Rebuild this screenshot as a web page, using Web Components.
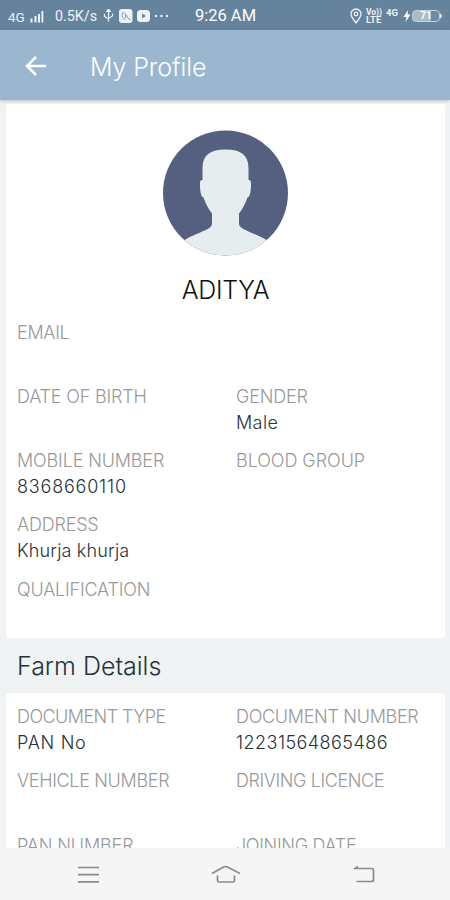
<!DOCTYPE html>
<html lang="en">
<head>
<meta charset="utf-8">
<title>My Profile</title>
<style>
	html,
	body {
		height: 100%;
	}
	body {
		margin: 0;
		overflow: hidden;
		font-family: Inter, Roboto, sans-serif;
		font-weight: 300;
	}
</style>
</head>
<body>
<profile-screen></profile-screen>

<script>
class StatusBar extends HTMLElement {
	constructor() {
		super();
		this.attachShadow({ mode: 'open' });
	}

	connectedCallback() {
		this.shadowRoot.innerHTML = `
		<style>
			:host {
				display: grid;
				grid-template-columns: 1fr auto 1fr;
				align-items: center;
				height: 30px;
				padding: 2px 7px 0 8px;
				box-sizing: border-box;
				background: #66839d;
				color: #eef3f7;
				font: 400 13.5px/16px Roboto, sans-serif;
			}
			.side {
				display: flex;
				align-items: center;
			}
			.right {
				justify-content: flex-end;
			}
			svg {
				display: block;
				flex: none;
			}
			.time {
				font-size: 16.5px;
				color: #fff;
			}
			.carrier {
				width: 18px;
				margin-top: 1px;
			}
			.speed {
				width: 43px;
				margin: 0 5px 0 11px;
				font-size: 14.3px;
			}
			.volte {
				display: grid;
				margin-left: 4px;
				font: 700 8.5px/8px Roboto, sans-serif;
			}
			.volte span:last-child {
				font-size: 9.5px;
			}
			.net {
				margin: -7px 5px 0 4px;
				font: 700 9.5px/9px Roboto, sans-serif;
			}
			.battery {
				width: 26px;
				height: 10px;
				margin-left: 1px;
				border: 1px solid #c4d0da;
				border-radius: 4px;
				background: linear-gradient(90deg, #a9bac8 71%, #7089a0 71%);
				font: 700 10px/10px Roboto, sans-serif;
				text-align: center;
				color: #fff;
			}
		</style>
		<div class="side">
			<span class="carrier">4G</span>
			<svg width="15" height="13" viewBox="0 0 15 13" fill="#eef3f7" style="margin-left:3px">
				<path d="M1.500 8.500h2v4h-2zM5.500 6h2v6.500h-2zM9 4h2v8.500H9zM12.500 1h1.800v11.500h-1.800z"/>
			</svg>
			<span class="speed">0.5K/s</span>
			<svg width="11" height="14" viewBox="0 0 11 14" fill="none" stroke="#eef3f7" stroke-width="1.200">
				<path d="M5.500 2v10M1.500 5v2.500l4 2.500M9.500 4.500V7l-4 2.500"/>
				<path d="M5.500 0l1.700 2.500H3.800zM5.500 11.500v1" fill="#eef3f7"/>
			</svg>
			<svg width="32" height="14" viewBox="0 0 32 14" fill="#eef3f7" style="margin-left:5px">
				<rect y="0" width="13.500" height="14" rx="3"/>
				<path d="M4 8.500C2.500 6 3 3.500 4.500 3.500S7 6 6.500 9M7.500 6c1 3 2 4.500 4 4.500M4 9.500l2.500 1" fill="none" stroke="#66839d" stroke-width=".8"/>
				<rect x="18" y="1" width="13" height="12" rx="3.500"/>
				<path d="M23 4.500v5l4-2.500z" fill="#66839d"/>
			</svg>
			<svg width="16" height="4" viewBox="0 0 16 4" fill="#eef3f7" style="margin-left:3px">
				<circle cx="2" cy="2" r="1.200"/><circle cx="7.500" cy="2" r="1.200"/><circle cx="13" cy="2" r="1.200"/>
			</svg>
		</div>
		<span class="time">9:26 AM</span>
		<div class="side right">
			<svg width="12" height="16" viewBox="0 0 12 16" fill="none" stroke="#eef3f7" stroke-width="1.300">
				<path d="M6 15C4 12 1 9 1 6a5 5 0 0 1 10 0c0 3-3 6-5 9z"/>
				<circle cx="6" cy="6" r="1.800"/>
			</svg>
			<div class="volte"><span>Vo))</span><span>LTE</span></div>
			<span class="net">4G</span>
			<svg width="8" height="12" viewBox="0 0 8 12" fill="#fff"><path d="M5 0L0.500 7H3.500L2.500 12 7.500 4.500H4.500z"/></svg>
			<div class="battery">71</div>
			<svg width="3" height="6" viewBox="0 0 3 6" fill="#dbe4eb"><path d="M0 0l2.500 3L0 6z"/></svg>
		</div>
		`;
	}
}

customElements.define('status-bar', StatusBar);

class AppBar extends HTMLElement {
	constructor() {
		super();
		this.attachShadow({ mode: 'open' });
	}

	connectedCallback() {
		this.shadowRoot.innerHTML = `
		<style>
			:host {
				display: flex;
				align-items: center;
				height: 70px;
				padding: 0 25px;
				background: #9bb6cf;
				color: #fff;
				box-shadow: 0 1px 3px rgba(0, 0, 0, 0.22);
				z-index: 1;
				font-size: 25px;
				line-height: 32px;
				letter-spacing: -0.1px;
			}
			svg {
				margin-top: 1px;
			}
			.title {
				margin: 3px 0 0 43px;
			}
		</style>
		<svg width="22" height="22" viewBox="0 0 22 22" fill="none" stroke="#fff" stroke-width="2.500">
			<path d="M21 11H3M11 2L2 11l9 9"/>
		</svg>
		<span class="title"><slot></slot></span>
		`;
	}
}

customElements.define('app-bar', AppBar);

class ProfileAvatar extends HTMLElement {
	constructor() {
		super();
		this.attachShadow({ mode: 'open' });
	}

	connectedCallback() {
		this.shadowRoot.innerHTML = `
		<style>
			:host {
				display: flex;
				flex-direction: column;
				align-items: center;
				color: #111;
				font-size: 25px;
				line-height: 32px;
				letter-spacing: -0.3px;
			}
			svg {
				display: block;
				margin-bottom: 18px;
			}
		</style>
		<svg width="126" height="126" viewBox="0 0 126 126">
			<defs><clipPath id="disc"><circle cx="62.500" cy="63" r="62.500"/></clipPath></defs>
			<g clip-path="url(#disc)">
				<rect width="126" height="126" fill="#555f80"/>
				<path fill="#e6edee" d="M39.500 50V38C39.500 25 47 19.500 62.500 19.500S85.500 25 85.500 38v12c2.500 0 2.500 1.500 2.500 5 0 6-1 12-3.500 12.500-2 6-5 11.500-8.500 16v9.500c0 2.500 1 4 3.500 5.500 7 4 17 7 24 11.500V127H21.500v-17c7-4.500 17-7.500 24-11.500 2.500-1.500 3.500-3 3.500-5.500v-9.500c-3.500-4.500-6.500-10-8.500-16C38 67 37 61 37 55c0-3.500 0-5 2.500-5z"/>
			</g>
		</svg>
		<slot></slot>
		`;
	}
}

customElements.define('profile-avatar', ProfileAvatar);

class ProfileField extends HTMLElement {
	constructor() {
		super();
		this.attachShadow({ mode: 'open' });
	}

	connectedCallback() {
		const labelTracking = this.getAttribute('label-tracking') || -0.2;
		const valueTracking = this.getAttribute('value-tracking') || 0.4;
		this.shadowRoot.innerHTML = `
		<style>
			:host {
				display: block;
				height: 64.3px;
				font-size: 18px;
				line-height: 26px;
				white-space: nowrap;
			}
			:host([wide]) {
				grid-column: 1 / -1;
			}
			.label {
				color: #999;
				letter-spacing: ${labelTracking}px;
			}
			.value {
				color: #263238;
				letter-spacing: ${valueTracking}px;
			}
		</style>
		<div class="label">${this.getAttribute('label')}</div>
		<div class="value"><slot></slot></div>
		`;
	}
}

customElements.define('profile-field', ProfileField);

class DetailCard extends HTMLElement {
	constructor() {
		super();
		this.attachShadow({ mode: 'open' });
	}

	connectedCallback() {
		this.shadowRoot.innerHTML = `
		<style>
			:host {
				display: block;
				margin: 0 5px 0 6px;
				box-sizing: border-box;
				background: #fff;
				border-radius: 3px;
			}
			.fields {
				display: grid;
				grid-template-columns: 219px 1fr;
				padding: 0 11px;
			}
		</style>
		<slot name="head"></slot>
		<div class="fields"><slot></slot></div>
		`;
	}
}

customElements.define('detail-card', DetailCard);

class NavBar extends HTMLElement {
	constructor() {
		super();
		this.attachShadow({ mode: 'open' });
	}

	connectedCallback() {
		this.shadowRoot.innerHTML = `
		<style>
			:host {
				display: flex;
				justify-content: space-between;
				align-items: center;
				height: 52px;
				padding: 2px 75px 0 77px;
				box-sizing: border-box;
				background: #f5f5f5;
			}
			svg {
				display: block;
				fill: none;
				stroke: #8a8a8a;
				stroke-width: 1.700;
			}
		</style>
		<svg width="22" height="20" viewBox="0 0 22 20"><path d="M1 2.500h21M1 9.700h21M1 16.800h21"/></svg>
		<svg width="30" height="20" viewBox="0 0 30 20"><path d="M1 8.500L12.500 2q2-1 4 0L29 8.500M6.500 10.500v5q0 1.500 1.500 1.500h14q1.500 0 1.500-1.500v-5"/></svg>
		<svg width="22" height="20" viewBox="0 0 22 20"><path d="M1 3.500h17.500q2 0 2 2v9q0 2-2 2H3.500"/><path d="M0 4l5-3.500V4z" fill="#8a8a8a" stroke="none"/></svg>
		`;
	}
}

customElements.define('nav-bar', NavBar);

class ProfileScreen extends HTMLElement {
	constructor() {
		super();
		this.attachShadow({ mode: 'open' });
	}

	connectedCallback() {
		this.shadowRoot.innerHTML = `
		<style>
			:host {
				display: flex;
				flex-direction: column;
				height: 100vh;
				background: #f0f3f4;
			}
			main {
				flex: 1;
				min-height: 0;
				overflow: hidden;
				padding-top: 4px;
			}
			.personal {
				height: 534px;
				padding-top: 26px;
			}
			profile-avatar {
				margin-bottom: 13.500px;
			}
			h2 {
				margin: 0;
				padding: 1px 17px 0;
				font-size: 25px;
				font-weight: 300;
				line-height: 54px;
				color: #263238;
			}
			.farm {
				height: 200px;
				padding-top: 11px;
			}
		</style>
		<status-bar></status-bar>
		<app-bar>My Profile</app-bar>
		<main>
			<detail-card class="personal">
				<profile-avatar slot="head">ADITYA</profile-avatar>
				<profile-field label="EMAIL" label-tracking="-0.3" wide></profile-field>
				<profile-field label="DATE OF BIRTH"></profile-field>
				<profile-field label="GENDER">Male</profile-field>
				<profile-field label="MOBILE NUMBER" label-tracking="-0.15" value-tracking="0.8">8368660110</profile-field>
				<profile-field label="BLOOD GROUP" label-tracking="-0.05"></profile-field>
				<profile-field label="ADDRESS" value-tracking="0.17" wide>Khurja khurja</profile-field>
				<profile-field label="QUALIFICATION" wide></profile-field>
			</detail-card>
			<h2>Farm Details</h2>
			<detail-card class="farm">
				<profile-field label="DOCUMENT TYPE" label-tracking="-0.55" value-tracking="0.7">PAN No</profile-field>
				<profile-field label="DOCUMENT NUMBER" label-tracking="-0.3" value-tracking="0.45">12231564865486</profile-field>
				<profile-field label="VEHICLE NUMBER" label-tracking="-0.33"></profile-field>
				<profile-field label="DRIVING LICENCE" label-tracking="-0.42"></profile-field>
				<profile-field label="PAN NUMBER" label-tracking="-0.13"></profile-field>
				<profile-field label="JOINING DATE" label-tracking="-0.33"></profile-field>
			</detail-card>
		</main>
		<nav-bar></nav-bar>
		`;
	}
}

customElements.define('profile-screen', ProfileScreen);
</script>
</body>
</html>
